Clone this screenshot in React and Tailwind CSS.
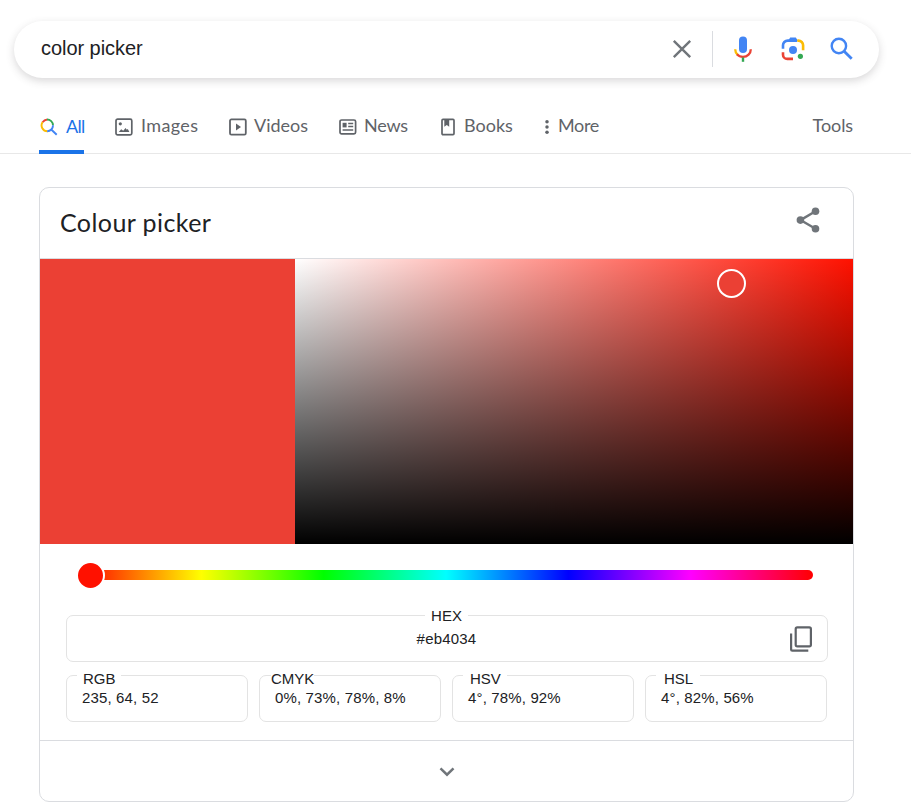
import React from "react";

const icon = "block shrink-0";

function AllIcon() {
  return (
    <svg className={`${icon} w-[18px] h-[18px]`} viewBox="0 0 18 18" fill="none" strokeWidth="1.9">
      <path d="M2.6 4.3A5.9 5.9 0 0 1 7.3 1.5" stroke="#ea4335" />
      <path d="M7 1.5A5.9 5.9 0 0 1 13 7.3" stroke="#34a853" />
      <path d="M2.6 4.1A5.9 5.9 0 0 0 7.6 13.3" stroke="#fbbc04" />
      <path d="M7.2 13.3A5.9 5.9 0 0 0 13 7.3M11 11.2l5.7 5.5" stroke="#4285f4" />
    </svg>
  );
}

function ImagesIcon() {
  return (
    <svg className={`${icon} w-[18px] h-[18px]`} viewBox="0 0 18 18" fill="none" stroke="#5f6368" strokeWidth="1.7">
      <rect x="1" y="1.2" width="15.8" height="15.6" rx="1.6" />
      <circle cx="5.3" cy="5.8" r="1.6" fill="#5f6368" stroke="none" />
      <path d="M3.8 14l2.4-2.8 2 1.5 2.4-2.6 1.2 1.6 1-.7 1.6 3z" fill="#5f6368" stroke="none" />
    </svg>
  );
}

function VideosIcon() {
  return (
    <svg className={`${icon} w-[18px] h-[18px]`} viewBox="0 0 18 18" fill="none" stroke="#5f6368" strokeWidth="1.8">
      <rect x="1" y="1.4" width="15.8" height="15.2" rx="1.4" />
      <path d="M7 5.6v6.8l5-3.4z" fill="#5f6368" stroke="none" />
    </svg>
  );
}

function NewsIcon() {
  return (
    <svg className={`${icon} w-[18px] h-[18px]`} viewBox="0 0 18 18" fill="none" stroke="#5f6368" strokeWidth="1.7">
      <rect x="1" y="2" width="15.6" height="13.8" rx="1.6" />
      <path d="M3.6 4.8h4v4.6h-4z" fill="#5f6368" stroke="none" />
      <path d="M9.2 5.6h5M9.2 8.6h5M3.6 12h10.6" strokeWidth="1.5" />
    </svg>
  );
}

function BooksIcon() {
  return (
    <svg className={`${icon} w-[14px] h-[18px]`} viewBox="0 0 14 18" fill="none" stroke="#5f6368" strokeWidth="1.7">
      <rect x="1" y="1.4" width="12" height="15.2" rx="1" />
      <path d="M3.3 1.4h4.9v7.4L5.8 7 3.3 8.8z" fill="#5f6368" stroke="none" />
    </svg>
  );
}

function MoreIcon() {
  return (
    <svg className={`${icon} w-[4px] h-[18px]`} viewBox="0 0 4 18" fill="#5f6368">
      <circle cx="2" cy="3.8" r="1.75" />
      <circle cx="2" cy="9" r="1.75" />
      <circle cx="2" cy="14.2" r="1.75" />
    </svg>
  );
}

function Tab({ children, label, className }) {
  return (
    <div className={`flex items-center h-full ${className}`}>
      {children}
      <span className="whitespace-nowrap -mt-[3px]">{label}</span>
    </div>
  );
}

function Field({ label, value, labelClass, valueClass }) {
  return (
    <div className="relative w-[182px] h-[47px] border border-[#e3e3e3] rounded-[7px]">
      <div className={`absolute -top-[6px] h-[18px] leading-[18px] bg-white ${labelClass}`}>{label}</div>
      <div className={`pt-[13px] leading-[18px] whitespace-nowrap tracking-[0.15px] ${valueClass}`}>{value}</div>
    </div>
  );
}

export default function App() {
  return (
    <main className="w-[911px] h-[804px] overflow-hidden bg-white pt-[21px] text-[#202124] font-['Liberation_Sans',Arial,sans-serif]">
      <div className="ml-[14px] w-[865px] h-[57px] rounded-full bg-white flex items-center pl-[27px] pb-px shadow-[0_3px_8px_0_rgba(64,60,67,0.2)]">
        <span className="text-[20px] leading-6 tracking-[-0.05px] -mt-[3px] w-[631px]">color picker</span>
        <svg className={`${icon} w-[20px] h-[20px]`} viewBox="0 0 20 20" fill="none" stroke="#70757a" strokeWidth="2.4">
          <path d="M1.8 1.8l16.4 16.4M18.2 1.8L1.8 18.2" />
        </svg>
        <div className="ml-[20px] w-px h-[36px] bg-[#dadce0]" />
        <svg className={`${icon} ml-[20px] w-[20px] h-[28px]`} viewBox="0 0 20 28">
          <rect x="6" y="1.5" width="8" height="16.5" rx="4" fill="#4285f4" />
          <path d="M2.2 14.3c0 2.4 1 4.3 2.5 5.6" fill="none" stroke="#fbbc04" strokeWidth="2.3" />
          <path d="M4 19.2c1.5 1.7 3.5 2.6 6 2.6 4.5 0 7.8-3.4 7.8-7.5" fill="none" stroke="#ea4335" strokeWidth="2.3" />
          <path d="M8.8 22.5h2.4v4.3H8.8z" fill="#34a853" />
        </svg>
        <svg className={`${icon} ml-[27px] w-[26px] h-[26px]`} viewBox="0 0 26 26" fill="none" strokeWidth="2.6">
          <path d="M3 12.7V9.3A4.7 4.7 0 0 1 7.7 4.6H17" stroke="#4285f4" />
          <path d="M8 5l2.2-3.4h5.6L18 5z" fill="#4285f4" />
          <path d="M17.3 4.6h1.1a4.7 4.7 0 0 1 4.7 4.7v4.9" stroke="#fbbc04" />
          <path d="M3 16.2v2.5a4.2 4.2 0 0 0 4.2 4.2h5.8" stroke="#ea4335" />
          <circle cx="13" cy="14" r="4" fill="#4285f4" />
          <circle cx="20.4" cy="20.3" r="2.6" fill="#34a853" />
        </svg>
        <svg className={`${icon} ml-[24px] w-[24px] h-[24px]`} viewBox="0 0 24 24" fill="none" stroke="#4285f4" strokeWidth="2.4">
          <circle cx="8.9" cy="9" r="7.2" />
          <path d="M14.1 14.2l7.6 7.6" strokeWidth="2.8" />
        </svg>
      </div>

      <nav className="mt-[22px] h-[54px] border-b border-[#e8e8e8] flex items-stretch text-[18px] leading-6 text-[#5f6368] font-['Lato',sans-serif]">
        <div className="relative ml-[39px] w-[45px] h-[54px] text-[#1a73e8]">
          <Tab label="All" className="gap-[8px] pl-px tracking-[-0.7px]"><AllIcon /></Tab>
          <div className="absolute left-0 bottom-0 w-[45px] h-[4px] bg-[#1a73e8]" />
        </div>
        <Tab label="Images" className="ml-[31px] w-[114px] gap-[8px] tracking-[0.35px]"><ImagesIcon /></Tab>
        <Tab label="Videos" className="w-[110px] gap-[7px]"><VideosIcon /></Tab>
        <Tab label="News" className="w-[102px] gap-[7px] tracking-[-0.25px]"><NewsIcon /></Tab>
        <Tab label="Books" className="w-[104px] gap-[9px]"><BooksIcon /></Tab>
        <Tab label="More" className="gap-[9px] tracking-[-0.35px]"><MoreIcon /></Tab>
        <Tab label="Tools" className="ml-auto mr-[58px] tracking-[-0.1px]" />
      </nav>

      <section className="ml-[39px] mt-[33px] w-[815px] h-[615px] border border-[#dadce0] rounded-[10px] flex flex-col overflow-hidden">
        <header className="h-[71px] shrink-0 border-b border-[#dadce0] flex items-center justify-between pl-[20px] pr-[32px]">
          <h1 className="text-[25px] leading-8 tracking-[0.42px] -mt-[2px] font-['Lato',sans-serif]">Colour picker</h1>
          <svg className={`${icon} w-[26px] h-[26px] -mt-[6px]`} viewBox="0 0 26 26" fill="#70757a">
            <path d="M20.5 4.3l-15 8.8 15 8.6" fill="none" stroke="#70757a" strokeWidth="2.4" />
            <circle cx="20.5" cy="4.3" r="3.8" />
            <circle cx="5.4" cy="13.1" r="3.8" />
            <circle cx="20.5" cy="21.7" r="3.8" />
          </svg>
        </header>

        <div className="flex h-[285px] shrink-0">
          <div className="w-[255px] bg-[#eb4034]" />
          <div className="relative flex-1 bg-[linear-gradient(to_top,#000,rgba(0,0,0,0)),linear-gradient(to_right,#fff,#ff1100)]">
            <div className="absolute left-[422px] top-[10px] w-[29px] h-[29px] rounded-full border-2 border-white bg-[#eb4034]" />
          </div>
        </div>

        <div className="relative mt-[26px] ml-[39px] w-[734px] h-[10px] shrink-0 rounded-full bg-[linear-gradient(to_right,#f00_0%,#ff0_16.67%,#0f0_33.33%,#0ff_50%,#00f_66.67%,#f0f_83.33%,#f00_100%)]">
          <div className="absolute -left-[3px] -top-[9px] w-[29px] h-[29px] rounded-full border-2 border-white bg-[#ff1100]" />
        </div>

        <div className="relative mt-[35px] ml-[26px] w-[762px] h-[47px] shrink-0 border border-[#e3e3e3] rounded-[7px] text-[15px] text-center">
          <div className="absolute left-[358px] -top-[9px] w-[43px] h-[18px] leading-[18px] bg-white">HEX</div>
          <div className="pt-[14px] pr-px leading-[18px] tracking-[0.2px]">#eb4034</div>
          <svg className="absolute left-[722px] top-[9px] w-[24px] h-[28px]" viewBox="0 0 24 28" fill="none" stroke="#5f6368" strokeWidth="2.2">
            <rect x="6.7" y="2.3" width="15.2" height="19" rx="1.6" />
            <path d="M2.1 8.5v16a1.2 1.2 0 0 0 1.2 1.2h16" />
          </svg>
        </div>

        <div className="mt-[13px] ml-[26px] flex gap-[11px] shrink-0 text-[15px]">
          <Field label="RGB" value="235, 64, 52" labelClass="left-[10px] w-[44px] pl-[6px]" valueClass="pl-[15px]" />
          <Field label="CMYK" value="0%, 73%, 78%, 8%" labelClass="left-[11px] w-[43px]" valueClass="pl-[15px]" />
          <Field label="HSV" value="4°, 78%, 92%" labelClass="left-[10px] w-[44px] pl-[7px]" valueClass="pl-[15px]" />
          <Field label="HSL" value="4°, 82%, 56%" labelClass="left-[10px] w-[44px] pl-[8px]" valueClass="pl-[15px]" />
        </div>

        <footer className="mt-[18px] flex-1 border-t border-[#dadce0] flex justify-center items-center pt-px">
          <svg className="w-[16px] h-[10px]" viewBox="0 0 16 10" fill="none" stroke="#70757a" strokeWidth="2.5">
            <path d="M1.5 1.3L8 7.7l6.5-6.4" />
          </svg>
        </footer>
      </section>
    </main>
  );
}
